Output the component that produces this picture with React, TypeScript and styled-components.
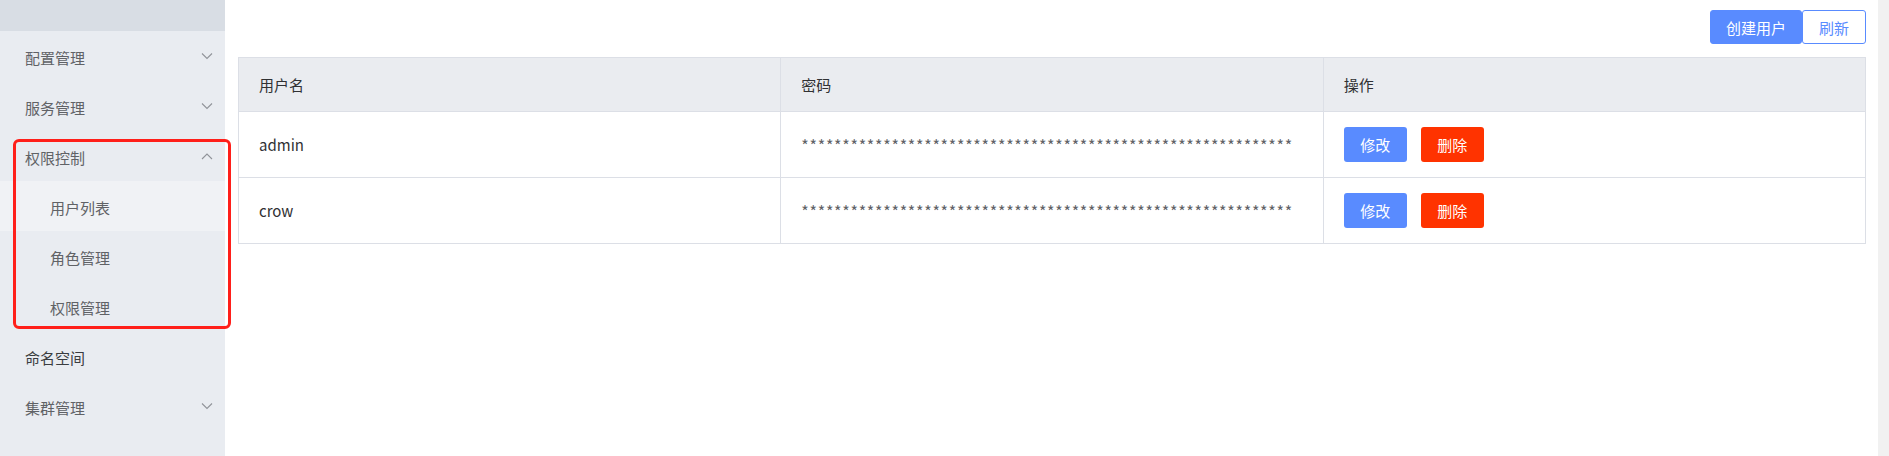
import styled, { createGlobalStyle } from 'styled-components';

const GlobalStyle = createGlobalStyle`
    html, body {
        margin: 0;
        padding: 0;
        height: 100%;
        background: #ffffff;
    }
    body {
        font-family: "Noto Sans CJK SC", "Noto Sans", sans-serif;
        font-size: 15px;
        color: #303133;
    }
    * {
        box-sizing: border-box;
    }
`;

const Layout = styled.div`
    position: relative;
    display: flex;
    width: 100%;
    height: 456px;
    overflow: hidden;
`;

const Sidebar = styled.aside`
    width: 225px;
    flex-shrink: 0;
    background: #e9ecf1;
    display: flex;
    flex-direction: column;
`;

const SideTop = styled.div`
    height: 31px;
    background: #d8dde4;
`;

const MenuItem = styled.div<{ $sub?: boolean; $active?: boolean; $strong?: boolean }>`
    height: 50px;
    display: flex;
    align-items: center;
    justify-content: space-between;
    padding: 2px 12px 0 ${p => (p.$sub ? '50px' : '25px')};
    font-size: 15px;
    color: ${p => (p.$strong ? '#3a3c40' : '#606266')};
    background: ${p => (p.$active ? '#f0f2f5' : 'transparent')};
`;

const Chevron = styled.svg`
    width: 12px;
    height: 8px;
    margin-top: -3px;
    color: #909399;
`;

// red annotation frame drawn over the expanded submenu
const Highlight = styled.div`
    position: absolute;
    left: 13px;
    top: 139px;
    width: 218px;
    height: 190px;
    border: 3px solid #ff1f1a;
    border-radius: 6px;
    pointer-events: none;
`;

const Main = styled.main`
    flex: 1;
    padding: 10px 12px 0 13px;
    display: flex;
    flex-direction: column;
`;

const Toolbar = styled.div`
    display: flex;
    justify-content: flex-end;
    margin-bottom: 13px;
`;

const ToolButton = styled.button<{ $primary?: boolean }>`
    height: 34px;
    padding: 0 ${p => (p.$primary ? '15px' : '16px')};
    font-family: inherit;
    font-size: 15px;
    border: 1px solid #598bff;
    background: ${p => (p.$primary ? '#598bff' : '#ffffff')};
    color: ${p => (p.$primary ? '#ffffff' : '#598bff')};
    border-radius: 3px;
    cursor: pointer;
`;

const Table = styled.table`
    width: 100%;
    table-layout: fixed;
    border-collapse: collapse;
    border: 1px solid #dcdfe6;
    font-size: 15px;

    th {
        height: 54px;
        background: #eaecf0;
        text-align: left;
        font-weight: 400;
        color: #303133;
        padding: 0 20px;
        border: 1px solid #dcdfe6;
    }

    td {
        height: 66px;
        padding: 0 20px;
        color: #303133;
        border: 1px solid #dcdfe6;
        background: #ffffff;
    }
`;

const Mask = styled.span`
    color: #606266;
    font-size: 16px;
    letter-spacing: 0.72px;
    vertical-align: -3px;
    white-space: nowrap;
`;

const ActionButton = styled.button<{ $danger?: boolean }>`
    width: 63px;
    height: 35px;
    margin-right: 14px;
    font-family: inherit;
    font-size: 15px;
    color: #ffffff;
    border: none;
    border-radius: 3px;
    background: ${p => (p.$danger ? '#ff3300' : '#598bff')};
    cursor: pointer;
`;

const Scrollbar = styled.div`
    width: 11px;
    flex-shrink: 0;
    background: #f1f1f1;
`;

const ChevronIcon = ({ up }: { up?: boolean }) => (
    <Chevron viewBox="0 0 12 8">
        <polyline
            points={up ? '1,7 6,2 11,7' : '1,1.5 6,6.5 11,1.5'}
            fill="none"
            stroke="currentColor"
            strokeWidth="1.1"
        />
    </Chevron>
);

const users = [
    { name: 'admin' },
    { name: 'crow' },
];

const MASK = '*'.repeat(60);

export default function App() {
    return (
        <Layout>
            <GlobalStyle />
            <Sidebar>
                <SideTop />
                <MenuItem>配置管理<ChevronIcon /></MenuItem>
                <MenuItem>服务管理<ChevronIcon /></MenuItem>
                <MenuItem>权限控制<ChevronIcon up /></MenuItem>
                <MenuItem $sub $active>用户列表</MenuItem>
                <MenuItem $sub>角色管理</MenuItem>
                <MenuItem $sub>权限管理</MenuItem>
                <MenuItem $strong>命名空间</MenuItem>
                <MenuItem>集群管理<ChevronIcon /></MenuItem>
            </Sidebar>
            <Main>
                <Toolbar>
                    <ToolButton $primary>创建用户</ToolButton>
                    <ToolButton>刷新</ToolButton>
                </Toolbar>
                <Table>
                    <thead>
                        <tr>
                            <th>用户名</th>
                            <th>密码</th>
                            <th>操作</th>
                        </tr>
                    </thead>
                    <tbody>
                        {users.map(u => (
                            <tr key={u.name}>
                                <td>{u.name}</td>
                                <td><Mask>{MASK}</Mask></td>
                                <td>
                                    <ActionButton>修改</ActionButton>
                                    <ActionButton $danger>删除</ActionButton>
                                </td>
                            </tr>
                        ))}
                    </tbody>
                </Table>
            </Main>
            <Scrollbar />
            <Highlight />
        </Layout>
    );
}
